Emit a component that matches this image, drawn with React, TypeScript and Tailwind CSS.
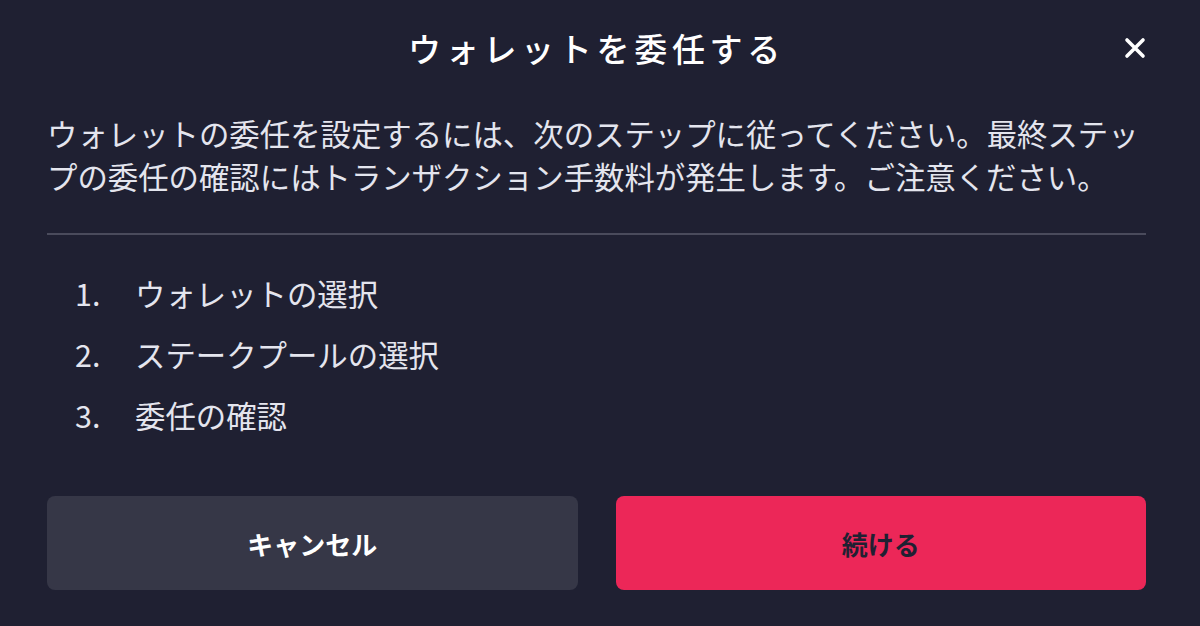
import React from "react";

const font = { fontFamily: '"Noto Sans CJK JP", "Noto Sans", sans-serif' };

export default function App() {
  const steps = ["ウォレットの選択", "ステークプールの選択", "委任の確認"];
  return (
    <div
      className="w-[1200px] h-[626px] bg-[#1f2032] pl-[47px] pr-[54px] pt-[24px] flex flex-col overflow-hidden"
      style={font}
    >
      <div className="relative h-[48px] flex items-center justify-center">
        <h1 className="text-[33px] leading-[48px] font-medium tracking-[4.7px] text-white">
          ウォレットを委任する
        </h1>
        <button className="absolute right-0 top-[13px] w-[22px] h-[22px] flex items-center justify-center">
          <svg width="22" height="22" viewBox="0 0 22 22">
            <path d="M3 3 L19 19 M19 3 L3 19" stroke="#ffffff" strokeWidth="3.6" strokeLinecap="round" />
          </svg>
        </button>
      </div>

      <p className="mt-[40px] text-[30.4px] leading-[43px] text-[#e4e5ee]">
        ウォレットの委任を設定するには、次のステップに従ってください。最終ステップの委任の確認にはトランザクション手数料が発生します。ご注意ください。
      </p>

      <div className="mt-[35px] h-[2px] bg-[#4a4b5c]" />

      <ol className="mt-[28px] pl-[28px] flex flex-col">
        {steps.map((s, i) => (
          <li key={i} className="flex h-[61px] items-center text-[30.4px] text-[#e4e5ee]">
            <span className="w-[60px]">{i + 1}.</span>
            <span>{s}</span>
          </li>
        ))}
      </ol>

      <div className="mt-[50px] flex gap-[38px]">
        <button className="flex-1 h-[94px] rounded-[8px] bg-[#363747] text-white text-[26px] font-bold">
          キャンセル
        </button>
        <button className="flex-1 h-[94px] rounded-[8px] bg-[#ec2758] text-[#1f2032] text-[26px] font-bold">
          続ける
        </button>
      </div>
    </div>
  );
}
